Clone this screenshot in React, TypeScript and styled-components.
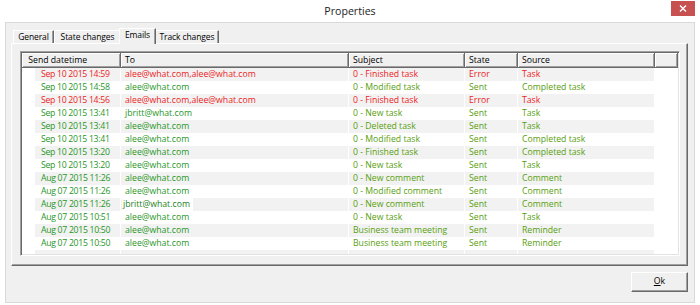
import React from 'react';
import styled, { createGlobalStyle } from 'styled-components';

const Global = createGlobalStyle`
  html, body { margin: 0; padding: 0; background: #ffffff; }
  body { font-family: "Open Sans", "Noto Sans", sans-serif; }
  * { box-sizing: border-box; }
`;

const Window = styled.div`
  width: 700px;
  height: 305px;
  background: #ffffff;
  display: flex;
  flex-direction: column;
  overflow: hidden;
`;

const TitleBar = styled.div`
  height: 22px;
  display: grid;
  grid-template-columns: 1fr auto 1fr;
  align-items: start;
`;

const Title = styled.div`
  grid-column: 2;
  font-size: 10.6px;
  line-height: 22px;
  color: #222;
`;

const CloseButton = styled.div`
  grid-column: 3;
  justify-self: end;
  margin: 1px 5px 0 0;
  width: 24px;
  height: 15px;
  background: #c75050;
  display: flex;
  align-items: center;
  justify-content: center;
`;

const Client = styled.div`
  flex: 1;
  margin: 0 5px 2px 5px;
  border: 1px solid #d9d9d9;
  background: #f0f0f0;
  padding: 5px 6px 0 5px;
  display: flex;
  flex-direction: column;
`;

const TabStrip = styled.div`
  height: 15px;
  padding-left: 2px;
  display: flex;
  align-items: flex-end;
  position: relative;
  z-index: 1;
`;

const Tab = styled.div<{ $active?: boolean; $w: number }>`
  flex: none;
  width: ${p => p.$w}px;
  height: ${p => (p.$active ? 16 : 13)}px;
  margin: 0 ${p => (p.$active ? -1 : 0)}px ${p => (p.$active ? -1 : 0)}px ${p => (p.$active ? -2 : 0)}px;
  padding-bottom: ${p => (p.$active ? 1 : 0)}px;
  background: #f0f0f0;
  border-top: 1px solid #ffffff;
  border-left: 1px solid #ffffff;
  border-right: 1px solid #696969;
  box-shadow: inset -1px 0 0 #a0a0a0;
  font-size: 8.5px;
  line-height: 12px;
  letter-spacing: -0.1px;
  text-align: center;
  color: #000;
  white-space: nowrap;
  position: relative;
  z-index: ${p => (p.$active ? 2 : 1)};
`;

const Panel = styled.div`
  height: 223px;
  border-top: 1px solid #ffffff;
  border-left: 1px solid #ffffff;
  border-right: 1px solid #696969;
  border-bottom: 1px solid #696969;
  box-shadow: inset -1px -1px 0 #a0a0a0;
  padding: 7px 7px 9px 8px;
  display: flex;
`;

const List = styled.div`
  flex: 1;
  border-top: 1px solid #a0a0a0;
  border-left: 1px solid #a0a0a0;
  border-right: 1px solid #ffffff;
  border-bottom: 1px solid #ffffff;
  padding: 1px;
  box-shadow: inset 1px 1px 0 #696969, inset -1px -1px 0 #e3e3e3;
  background: #ffffff;
  display: flex;
  flex-direction: column;
  overflow: hidden;
`;

const cols = '99px 228px 116px 53px 137px 1fr';
const rowCols = '13px 86px 228px 116px 53px 137px 1fr';

const HeaderRow = styled.div`
  display: grid;
  grid-template-columns: ${cols};
  height: 15px;
  flex: none;
`;

const HeaderCell = styled.div`
  background: #f0f0f0;
  border-right: 1px solid #696969;
  border-bottom: 1px solid #696969;
  box-shadow: inset 1px 1px 0 #ffffff, inset -1px -1px 0 #a0a0a0;
  font-size: 8.7px;
  line-height: 14px;
  color: #000;
  padding-left: 4px;
  white-space: nowrap;
  overflow: hidden;
`;

const Body = styled.div`
  flex: 1;
  overflow: hidden;
`;

const Row = styled.div`
  display: grid;
  grid-template-columns: ${rowCols};
  height: 13px;
`;

const IconCell = styled.div`
  background: #ffffff;
`;

const Cell = styled.div<{ $striped: boolean; $color: string; $pad?: number; $tight?: boolean }>`
  background: ${p => (p.$striped ? '#f2f2f2' : '#ffffff')};
  border-right: 1px solid #ffffff;
  color: ${p => p.$color};
  font-size: 8.7px;
  line-height: 13px;
  letter-spacing: ${p => (p.$tight ? '-0.3px' : 'normal')};
  padding-left: ${p => p.$pad ?? 4}px;
  white-space: nowrap;
  overflow: hidden;
`;

const EditBox = styled.span`
  display: inline-block;
  background: #ffffff;
  margin-left: -3px;
  padding: 0 3px 0 1px;
  color: #1c7f1c;
`;

const Filler = styled.div`
  background: #ffffff;
`;

const Footer = styled.div`
  display: flex;
  justify-content: flex-end;
  padding: 6px 0 10px;
`;

const Button = styled.div`
  width: 57px;
  height: 20px;
  background: #f0f0f0;
  border-top: 1px solid #ffffff;
  border-left: 1px solid #ffffff;
  border-right: 1px solid #696969;
  border-bottom: 1px solid #696969;
  box-shadow: inset -1px -1px 0 #a0a0a0;
  font-size: 8.7px;
  line-height: 17px;
  text-align: center;
  color: #000;
`;

type Mail = { d: string; to: string; subj: string; state: string; src: string; err?: boolean; edit?: boolean };

const rows: Mail[] = [
  { d: 'Sep 10 2015 14:59', to: 'alee@what.com,alee@what.com', subj: '0 - Finished task', state: 'Error', src: 'Task', err: true },
  { d: 'Sep 10 2015 14:58', to: 'alee@what.com', subj: '0 - Modified task', state: 'Sent', src: 'Completed task' },
  { d: 'Sep 10 2015 14:56', to: 'alee@what.com,alee@what.com', subj: '0 - Finished task', state: 'Error', src: 'Task', err: true },
  { d: 'Sep 10 2015 13:41', to: 'jbritt@what.com', subj: '0 - New task', state: 'Sent', src: 'Task' },
  { d: 'Sep 10 2015 13:41', to: 'alee@what.com', subj: '0 - Deleted task', state: 'Sent', src: 'Task' },
  { d: 'Sep 10 2015 13:41', to: 'alee@what.com', subj: '0 - Modified task', state: 'Sent', src: 'Completed task' },
  { d: 'Sep 10 2015 13:20', to: 'alee@what.com', subj: '0 - Finished task', state: 'Sent', src: 'Completed task' },
  { d: 'Sep 10 2015 13:20', to: 'alee@what.com', subj: '0 - New task', state: 'Sent', src: 'Task' },
  { d: 'Aug 07 2015 11:26', to: 'alee@what.com', subj: '0 - New comment', state: 'Sent', src: 'Comment' },
  { d: 'Aug 07 2015 11:26', to: 'alee@what.com', subj: '0 - Modified comment', state: 'Sent', src: 'Comment' },
  { d: 'Aug 07 2015 11:26', to: 'jbritt@what.com', subj: '0 - New comment', state: 'Sent', src: 'Comment', edit: true },
  { d: 'Aug 07 2015 10:51', to: 'alee@what.com', subj: '0 - New task', state: 'Sent', src: 'Task' },
  { d: 'Aug 07 2015 10:50', to: 'alee@what.com', subj: 'Business team meeting', state: 'Sent', src: 'Reminder' },
  { d: 'Aug 07 2015 10:50', to: 'alee@what.com', subj: 'Business team meeting', state: 'Sent', src: 'Reminder' },
  { d: '', to: '', subj: '', state: '', src: '' },
];

const RED = '#ec1c24';
const GREEN_A = '#1f961f';
const GREEN_B = '#58a00e';

const tabs = [
  { label: 'General', w: 41 },
  { label: 'State changes', w: 67 },
  { label: 'Emails', w: 37, active: true },
  { label: 'Track changes', w: 64 },
];

export default function App() {
  return (
    <>
      <Global />
      <Window>
        <TitleBar>
          <Title>Properties</Title>
          <CloseButton>
            <svg width="8" height="7" viewBox="0 0 8 7">
              <path d="M1 0.5 L7 6.5 M7 0.5 L1 6.5" stroke="#fff" strokeWidth="1.4" />
            </svg>
          </CloseButton>
        </TitleBar>
        <Client>
          <TabStrip>
            {tabs.map(t => (
              <Tab key={t.label} $w={t.w} $active={t.active}>{t.label}</Tab>
            ))}
          </TabStrip>
          <Panel>
            <List>
              <HeaderRow>
                <HeaderCell>&nbsp;Send datetime</HeaderCell>
                <HeaderCell>To</HeaderCell>
                <HeaderCell>Subject</HeaderCell>
                <HeaderCell>State</HeaderCell>
                <HeaderCell>Source</HeaderCell>
                <HeaderCell />
              </HeaderRow>
              <Body>
                {rows.map((r, i) => {
                  const s = i % 2 === 0;
                  const a = r.err ? RED : GREEN_A;
                  const b = r.err ? RED : GREEN_B;
                  return (
                    <Row key={i}>
                      <IconCell />
                      <Cell $striped={s} $color={a} $pad={6} $tight>{r.d}</Cell>
                      <Cell $striped={s} $color={a}>
                        {r.edit ? <EditBox>{r.to}</EditBox> : r.to}
                      </Cell>
                      <Cell $striped={s} $color={b}>{r.subj}</Cell>
                      <Cell $striped={s} $color={b}>{r.state}</Cell>
                      <Cell $striped={s} $color={b}>{r.src}</Cell>
                      <Filler />
                    </Row>
                  );
                })}
              </Body>
            </List>
          </Panel>
          <Footer>
            <Button><u>O</u>k</Button>
          </Footer>
        </Client>
      </Window>
    </>
  );
}
